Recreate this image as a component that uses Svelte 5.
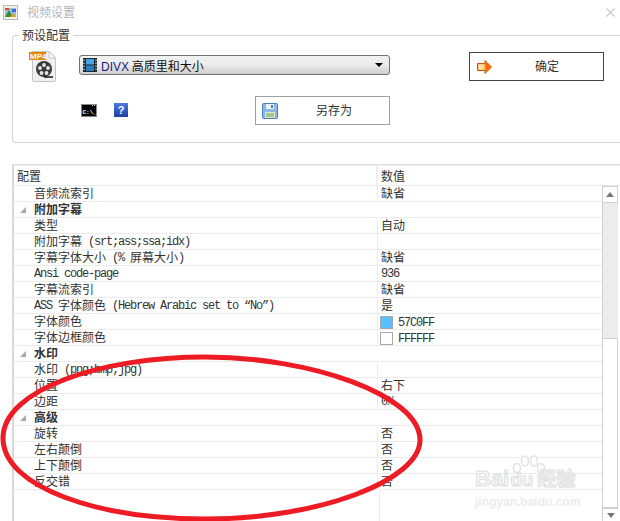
<script>
  const rows = [
    { label: '音频流索引', value: '缺省' },
    { label: '附加字幕', group: true },
    { label: '类型', value: '自动' },
    { label: '附加字幕 (srt;ass;ssa;idx)', value: '' },
    { label: '字幕字体大小 (% 屏幕大小)', value: '缺省' },
    { label: 'Ansi code-page', value: '936' },
    { label: '字幕流索引', value: '缺省' },
    { label: 'ASS 字体颜色 (Hebrew Arabic set to “No”)', value: '是' },
    { label: '字体颜色', value: '57C0FF', swatch: '#57c0ff' },
    { label: '字体边框颜色', value: 'FFFFFF', swatch: '#ffffff' },
    { label: '水印', group: true },
    { label: '水印 (png;bmp;jpg)', value: '' },
    { label: '位置', value: '右下' },
    { label: '边距', value: '0%' },
    { label: '高级', group: true },
    { label: '旋转', value: '否' },
    { label: '左右颠倒', value: '否' },
    { label: '上下颠倒', value: '否' },
    { label: '反交错', value: '否' }
  ];

  // latin runs get a narrower mono face, like the bitmap font in the app
  function runs(text) {
    return text.split(/([\x20-\x7e\u201c\u201d]+)/).filter(Boolean).map((t) => ({
      t,
      latin: /^[\x20-\x7e\u201c\u201d]+$/.test(t)
    }));
  }
</script>

<div class="window">
  <header class="titlebar">
    <svg class="app-icon" width="15" height="15" viewBox="0 0 15 15">
      <rect x="0.5" y="0.5" width="14" height="14" fill="#f4f1e6" stroke="#b9b9b9" />
      <rect x="2" y="3" width="11" height="9" fill="#8fc0e8" />
      <path d="M2 12 L6 5 L10 12 Z" fill="#3d8a2e" />
      <path d="M7 12 L10 8 L13 12 Z" fill="#d9a521" />
      <rect x="2" y="3" width="4" height="2" fill="#c8562a" />
      <rect x="9" y="4" width="4" height="3" fill="#5a5fd0" />
    </svg>
    <span class="title">视频设置</span>
    <svg class="close" width="9" height="9" viewBox="0 0 9 9">
      <path d="M0.5 0.5 L8.5 8.5 M8.5 0.5 L0.5 8.5" stroke="#c9c9c9" stroke-width="1.2" fill="none" />
    </svg>
  </header>

  <fieldset class="preset">
    <legend>预设配置</legend>
    <div class="preset-grid">
      <svg class="mp4" width="28" height="32" viewBox="0 0 28 32">
        <path d="M3.5 1.5 H20 L26.5 8 V30.5 Q26.5 31.5 25.5 31.5 H4.5 Q3.5 31.5 3.5 30.5 Z" fill="#f0f0f0" stroke="#c4c4c4" />
        <path d="M20 1.5 V8 H26.5 Z" fill="#fff" stroke="#c4c4c4" />
        <rect x="0" y="2" width="17" height="8" fill="#e8860c" />
        <text x="1" y="9" class="mp4-label">MP4</text>
        <circle cx="15" cy="19" r="8" fill="#3a3a3a" />
        <circle cx="15" cy="15" r="1.9" fill="#e6e6e6" />
        <circle cx="11" cy="18" r="1.9" fill="#e6e6e6" />
        <circle cx="19" cy="18" r="1.9" fill="#e6e6e6" />
        <circle cx="12.5" cy="23" r="1.9" fill="#e6e6e6" />
        <circle cx="17.5" cy="23" r="1.9" fill="#e6e6e6" />
        <path d="M15 27 H24" stroke="#222" stroke-width="1.6" />
      </svg>

      <div class="select">
        <svg width="14" height="14" viewBox="0 0 14 14">
          <rect width="14" height="14" fill="#1d2a33" />
          <rect x="3" y="1" width="8" height="5.5" fill="#4aa3e0" />
          <rect x="3" y="7.5" width="8" height="5.5" fill="#2c7cc0" />
          <path d="M1 1.5 V13 M13 1.5 V13" stroke="#dfe8ee" stroke-width="1" stroke-dasharray="1.5 1.5" />
        </svg>
        <span class="select-text"><span class="divx">DIVX</span> 高质里和大小</span>
        <span class="caret"></span>
      </div>

      <button class="btn ok" type="button">
        <svg width="15" height="14" viewBox="0 0 15 14">
          <path d="M0.5 3.5 H8 V0.5 L14.5 7 L8 13.5 V10.5 H0.5 Z" fill="#ffb45a" stroke="#c8500a" />
          <path d="M8.5 1.5 L14 7 L8.5 12.5 Z" fill="#f06a0a" />
          <rect x="1.5" y="4.5" width="5" height="5" fill="#ffe2b0" />
        </svg>
        <span>确定</span>
      </button>

      <div class="tools">
        <svg width="16" height="13" viewBox="0 0 16 13">
          <rect x="0.5" y="0.5" width="15" height="12" fill="#000" stroke="#8a8a8a" />
          <path d="M11 1.5 H15" stroke="#ddd" stroke-dasharray="1 1" />
          <text x="1.5" y="10" class="cmd-label">C:\_</text>
        </svg>
        <span class="help">?</span>
      </div>

      <button class="btn save" type="button">
        <svg width="16" height="16" viewBox="0 0 16 16">
          <rect x="0.5" y="0.5" width="15" height="15" rx="1" fill="#8db8e6" stroke="#4d7fc0" />
          <rect x="4" y="1" width="8" height="5" fill="#eef4fb" />
          <rect x="9" y="2" width="2" height="3" fill="#4d7fc0" />
          <rect x="3" y="9" width="10" height="6" fill="#d9e8c8" />
          <path d="M4 11 H12 M4 13 H12" stroke="#6aa84f" />
        </svg>
        <span>另存为</span>
      </button>
    </div>
  </fieldset>

  <section class="grid">
    <div class="table">
      <div class="row head">
        <div class="name">配置</div>
        <div class="val">数值</div>
      </div>
      <div class="body">
        <div class="rows">
          {#each rows as row}
            <div class="row" class:group={row.group}>
              <div class="name">
                {#if row.group}<span class="tri"></span>{/if}
                {#each runs(row.label) as r}<span class:latin={r.latin}>{r.t}</span>{/each}
              </div>
              {#if !row.group}
                <div class="val">
                  {#if row.swatch}<span class="swatch" style="background: {row.swatch}"></span>{/if}
                  {#each runs(row.value) as r}<span class:latin={r.latin}>{r.t}</span>{/each}
                </div>
              {/if}
            </div>
          {/each}
          <div class="rest"></div>
        </div>
        <div class="scrollbar">
          <div class="sb-btn"><span class="up"></span></div>
          <div class="sb-track"></div>
          <div class="sb-thumb"></div>
          <div class="sb-btn down"><span class="dn"></span></div>
        </div>
      </div>
    </div>
  </section>

  <div class="watermark">
    <svg class="paw" width="34" height="22" viewBox="0 0 34 22">
      <g fill="#fff" stroke="#e2e2e2" stroke-width="1.5">
        <ellipse cx="5" cy="13" rx="3.5" ry="4.5" />
        <ellipse cx="13" cy="6" rx="3.5" ry="5" />
        <ellipse cx="22" cy="6" rx="3.5" ry="5" />
        <ellipse cx="29" cy="13" rx="3.5" ry="4.5" />
      </g>
    </svg>
    <div class="wm-logo">Bai<span class="wm-du">du</span><span class="wm-cn">经验</span></div>
    <div class="wm-url">jingyan.baidu.com</div>
  </div>

  <svg class="circle" width="620" height="521" viewBox="0 0 620 521">
    <path
      d="M3 438 C3 390 100 357 205 357 C310 357 420 395 420 440 C420 480 320 519 205 519 C100 519 3 488 3 438 Z"
      fill="none"
      stroke="#ed1c24"
      stroke-width="5"
    />
  </svg>
</div>

<style>
  :global(body) {
    margin: 0;
    background: #fff;
  }

  .window {
    position: relative;
    width: 620px;
    height: 521px;
    overflow: hidden;
    display: flex;
    flex-direction: column;
    background: #fff;
    color: #333;
    font: 12px/16px "Noto Sans CJK SC", "Liberation Sans", sans-serif;
  }

  .titlebar {
    height: 24px;
    display: flex;
    align-items: center;
    padding: 0 5px 0 3px;
    flex: none;
  }

  .app-icon {
    margin-right: 9px;
  }

  .title {
    color: #b4b4b4;
  }

  .close {
    margin-left: auto;
  }

  .preset {
    margin: 4px 0 0 12px;
    padding: 0;
    height: 115px;
    box-sizing: border-box;
    border: 1px solid #d2d2d2;
    border-right: none;
    border-radius: 4px 0 0 4px;
    flex: none;
    min-width: 0;
  }

  legend {
    margin-left: 6px;
    padding: 0 3px;
    font-size: 12px;
    line-height: 14px;
    color: #333;
  }

  .preset-grid {
    display: grid;
    grid-template-columns: 66px 311px 79px 136px;
    grid-template-rows: 50px 28px;
    padding-top: 4px;
  }

  .mp4 {
    margin: 4px 0 0 16px;
  }

  .mp4-label {
    font: bold 8px "Liberation Sans", sans-serif;
    fill: #fff;
  }

  .select {
    align-self: start;
    margin-top: 9px;
    height: 18px;
    display: flex;
    align-items: center;
    gap: 4px;
    padding-left: 3px;
    border: 1px solid #707070;
    border-radius: 3px;
    background: linear-gradient(#f2f2f2, #ececec 45%, #cfcfcf);
    color: #111;
  }

  .select-text {
    padding-top: 2px;
  }

  .divx {
    color: #1c1c7a;
    font-family: "Liberation Sans", sans-serif;
  }

  .caret {
    margin-left: auto;
    margin-right: 6px;
    border: 4px solid transparent;
    border-top: 4px solid #000;
    border-bottom: none;
  }

  .btn {
    display: flex;
    align-items: center;
    box-sizing: border-box;
    background: #fff;
    font: inherit;
    color: #333;
    padding: 0;
  }

  .btn span {
    padding-bottom: 2px;
  }

  .ok {
    grid-column: 4;
    grid-row: 1;
    margin-top: 6px;
    width: 135px;
    height: 29px;
    border: 1px solid #444;
    padding-left: 7px;
  }

  .ok span {
    margin-left: 43px;
  }

  .tools {
    grid-column: 2;
    grid-row: 2;
    display: flex;
    align-items: center;
    gap: 17px;
    margin-left: 2px;
  }

  .cmd-label {
    font: bold 6px "Liberation Mono", monospace;
    fill: #fff;
  }

  .help {
    width: 14px;
    height: 14px;
    background: linear-gradient(#4a7be0, #1c3fa8);
    color: #fff;
    font: bold 11px/14px "Liberation Sans", sans-serif;
    text-align: center;
  }

  .save {
    grid-column: 2;
    grid-row: 2;
    justify-self: end;
    width: 135px;
    height: 29px;
    border: 1px solid #a0a0a0;
    padding-left: 6px;
  }

  .save span {
    margin-left: 38px;
  }

  .grid {
    margin: 21px 0 0 12px;
    flex: 1;
    min-height: 0;
    border-left: 2px solid #d9d9d9;
    border-top: 1px solid #dcdcdc;
  }

  .table {
    height: 100%;
    display: flex;
    flex-direction: column;
  }

  .row {
    display: grid;
    grid-template-columns: 364px 1fr;
    height: 16px;
    box-sizing: border-box;
    border-bottom: 1px solid #ebebeb;
    line-height: 13px;
    white-space: nowrap;
  }

  .row.head {
    height: 21px;
    flex: none;
    border-top: 1px solid #f0f0f0;
    line-height: 20px;
  }

  .row.head .name {
    padding-left: 3px;
    border-right: 2px solid #f0f0f0;
  }

  .row.head .val {
    padding-left: 3px;
  }

  .name {
    padding-left: 20px;
    position: relative;
    border-right: 1px solid #ebebeb;
  }

  .group .name {
    grid-column: 1 / -1;
    border-right: none;
    font-weight: 700;
  }

  .tri {
    position: absolute;
    left: 6px;
    top: 5px;
    border-left: 6px solid transparent;
    border-bottom: 6px solid #a8a8a8;
  }

  .val {
    padding-left: 3px;
    display: flex;
    align-items: center;
    align-self: stretch;
    padding-bottom: 2px;
    white-space: pre;
  }

  .latin {
    font: 12px/1 "Liberation Mono", monospace;
    letter-spacing: -1.2px;
    white-space: pre;
    position: relative;
    top: -1px;
  }

  .val .latin {
    top: 1px;
  }

  .swatch {
    width: 11px;
    height: 11px;
    border: 1px solid #a8a8a8;
    margin: 2px 5px 0 -1px;
    flex: none;
  }

  .body {
    flex: 1;
    min-height: 0;
    display: flex;
  }

  .rows {
    flex: 1;
    display: flex;
    flex-direction: column;
  }

  .rest {
    flex: 1;
    width: 365px;
    border-right: 1px solid #ebebeb;
  }

  .scrollbar {
    width: 18px;
    flex: none;
    box-sizing: border-box;
    padding-right: 2px;
    display: flex;
    flex-direction: column;
    border-left: 1px solid #d0d0d0;
    background: #fff;
  }

  .sb-btn {
    height: 17px;
    display: flex;
    align-items: center;
    justify-content: center;
    flex: none;
    border: 1px solid #d0d0d0;
    border-left: none;
    box-sizing: border-box;
  }

  .sb-btn.down {
    height: 14px;
    border: none;
    border-top: 2px solid #d0d0d0;
  }

  .up {
    border: 4px solid transparent;
    border-bottom: 5px solid #777;
    border-top: none;
  }

  .dn {
    border: 4px solid transparent;
    border-top: 5px solid #777;
    border-bottom: none;
  }

  .sb-track {
    height: 135px;
    flex: none;
    background: #ececec;
  }

  .sb-thumb {
    flex: 1;
    border-top: 1px solid #d0d0d0;
    border-right: 1px solid #d0d0d0;
    background: #fff;
  }

  .watermark {
    position: absolute;
    left: 475px;
    top: 466px;
    width: 110px;
    color: #f6f6f6;
    font-family: "Liberation Sans", sans-serif;
    pointer-events: none;
  }

  .paw {
    position: absolute;
    left: 37px;
    top: -11px;
  }

  .wm-logo {
    position: relative;
    font-size: 22px;
    line-height: 24px;
    font-weight: 700;
    -webkit-text-stroke: 1px #e0e0e0;
    white-space: nowrap;
  }

  .wm-du {
    margin: 0 4px 0 1px;
    font-size: 19px;
  }

  .wm-cn {
    font: 700 19px/24px "Noto Sans CJK SC", sans-serif;
  }

  .wm-url {
    margin-top: 3px;
    font-size: 12px;
    line-height: 14px;
    font-weight: 700;
    color: #ececec;
  }

  .circle {
    position: absolute;
    left: 0;
    top: 0;
    pointer-events: none;
  }
</style>
